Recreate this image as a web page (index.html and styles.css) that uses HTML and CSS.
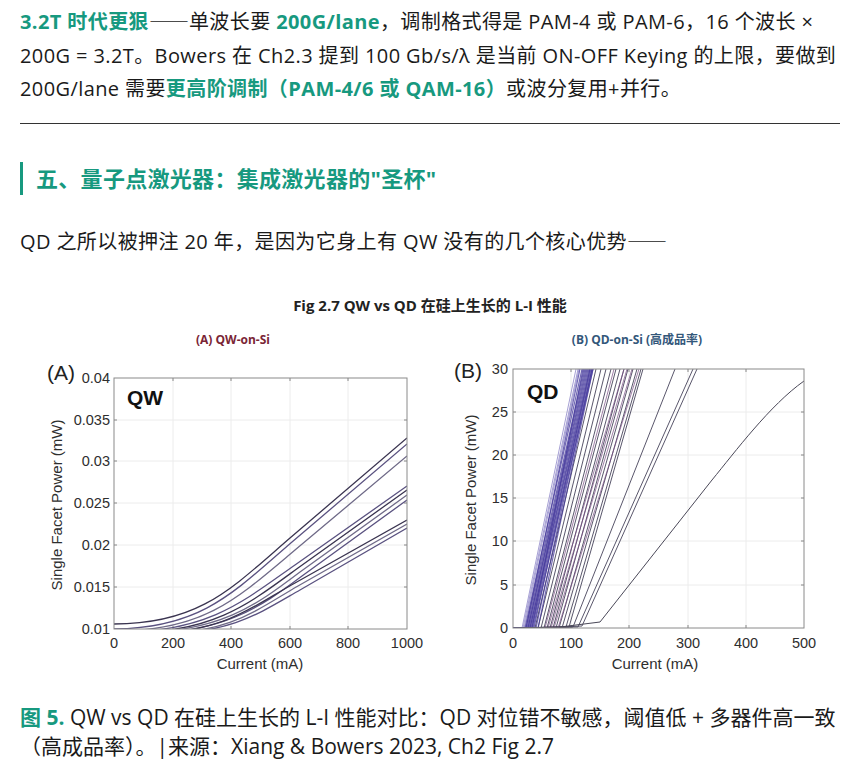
FILE: index.html
```html
<!DOCTYPE html>
<html lang="zh-CN">
<head>
<meta charset="utf-8">
<title>量子点激光器</title>
<link rel="stylesheet" href="styles.css">
</head>
<body>
<main class="article">
  <p class="para"><strong class="hl">3.2T 时代更狠</strong><span class="dash">——</span>单波长要 <strong class="hl">200G/lane</strong>，调制格式得是 PAM-4 或 PAM-6，16 个波长 × 200G = 3.2T。Bowers 在 Ch2.3 提到 100 Gb/s/λ 是当前 ON-OFF Keying 的上限，要做到 200G/lane 需要<strong class="hl">更高阶调制（PAM-4/6 或 QAM-16）</strong>或波分复用+并行。</p>
  <hr class="divider">
  <h2 class="section-title">五、量子点激光器：集成激光器的"圣杯"</h2>
  <p class="para para-lead">QD 之所以被押注 20 年，是因为它身上有 QW 没有的几个核心优势<span class="dash">——</span></p>
  <figure class="fig">
    <svg class="chart" viewBox="20 284 820 404" width="820" height="404" xmlns="http://www.w3.org/2000/svg">
      <defs>
        <clipPath id="clipA"><rect x="114" y="378" width="293" height="251"/></clipPath>
        <clipPath id="clipB"><rect x="513" y="369" width="291" height="259"/></clipPath>
      </defs>
      <text x="430" y="311" class="fig-title" text-anchor="middle">Fig 2.7 QW vs QD 在硅上生长的 L-I 性能</text>

      <!-- Panel A -->
      <text x="233" y="344" class="sub sub-a" text-anchor="middle">(A) QW-on-Si</text>
      <g class="grid">
        <line x1="173" y1="378" x2="173" y2="629"/><line x1="231" y1="378" x2="231" y2="629"/>
        <line x1="290" y1="378" x2="290" y2="629"/><line x1="348" y1="378" x2="348" y2="629"/>
        <line x1="114" y1="420" x2="407" y2="420"/><line x1="114" y1="461" x2="407" y2="461"/>
        <line x1="114" y1="503" x2="407" y2="503"/><line x1="114" y1="545" x2="407" y2="545"/>
        <line x1="114" y1="587" x2="407" y2="587"/>
      </g>
      <g class="ticks">
        <line x1="173" y1="629" x2="173" y2="626"/><line x1="231" y1="629" x2="231" y2="626"/>
        <line x1="290" y1="629" x2="290" y2="626"/><line x1="348" y1="629" x2="348" y2="626"/>
        <line x1="173" y1="378" x2="173" y2="381"/><line x1="231" y1="378" x2="231" y2="381"/>
        <line x1="290" y1="378" x2="290" y2="381"/><line x1="348" y1="378" x2="348" y2="381"/>
        <line x1="114" y1="420" x2="117" y2="420"/><line x1="114" y1="461" x2="117" y2="461"/>
        <line x1="114" y1="503" x2="117" y2="503"/><line x1="114" y1="545" x2="117" y2="545"/>
        <line x1="114" y1="587" x2="117" y2="587"/>
        <line x1="407" y1="420" x2="404" y2="420"/><line x1="407" y1="461" x2="404" y2="461"/>
        <line x1="407" y1="503" x2="404" y2="503"/><line x1="407" y1="545" x2="404" y2="545"/>
        <line x1="407" y1="587" x2="404" y2="587"/>
      </g>
      <g clip-path="url(#clipA)" class="qw-curves">
        <path class="c1" d="M114,624 C200,624 232,588 290,538 L407,438"/>
        <path class="c2" d="M114,629 C202,628 234,592 292,542 L407,444"/>
        <path class="c3" d="M120,631 C205,630 238,598 295,550 L407,456"/>
        <path class="c2" d="M125,632 C210,631 245,600 295,565 L407,486"/>
        <path class="c1" d="M130,633 C215,632 250,603 298,568 L407,490"/>
        <path class="c3" d="M135,633 C220,632 255,606 300,572 L407,495"/>
        <path class="c2" d="M140,634 C222,633 258,609 302,576 L407,500"/>
        <path class="c1" d="M150,633 C225,632 250,608 295,583 L407,520"/>
        <path class="c3" d="M155,634 C230,633 255,611 298,586 L407,524"/>
        <path class="c2" d="M160,634 C232,633 258,614 300,590 L407,528"/>
      </g>
      <rect class="frame" x="114" y="378" width="293" height="251"/>
      <text x="47" y="380" class="panel-tag">(A)</text>
      <text x="127" y="405" class="inset">QW</text>
      <g class="tick-label" text-anchor="end">
        <text x="110" y="383">0.04</text><text x="110" y="425">0.035</text>
        <text x="110" y="466">0.03</text><text x="110" y="508">0.025</text>
        <text x="110" y="550">0.02</text><text x="110" y="592">0.015</text>
        <text x="110" y="634">0.01</text>
      </g>
      <g class="tick-label" text-anchor="middle">
        <text x="114" y="648">0</text><text x="173" y="648">200</text>
        <text x="231" y="648">400</text><text x="290" y="648">600</text>
        <text x="348" y="648">800</text><text x="407" y="648">1000</text>
      </g>
      <text x="260" y="669" class="axis-title" text-anchor="middle">Current (mA)</text>
      <text transform="translate(62,505) rotate(-90)" class="axis-title" text-anchor="middle">Single Facet Power (mW)</text>

      <!-- Panel B -->
      <text x="637" y="344" class="sub sub-b" text-anchor="middle">(B) QD-on-Si (高成品率)</text>
      <g class="grid">
        <line x1="571" y1="369" x2="571" y2="628"/><line x1="629" y1="369" x2="629" y2="628"/>
        <line x1="688" y1="369" x2="688" y2="628"/><line x1="746" y1="369" x2="746" y2="628"/>
        <line x1="513" y1="412" x2="804" y2="412"/><line x1="513" y1="455" x2="804" y2="455"/>
        <line x1="513" y1="498" x2="804" y2="498"/><line x1="513" y1="541" x2="804" y2="541"/>
        <line x1="513" y1="585" x2="804" y2="585"/>
      </g>
      <g class="ticks">
        <line x1="571" y1="628" x2="571" y2="625"/><line x1="629" y1="628" x2="629" y2="625"/>
        <line x1="688" y1="628" x2="688" y2="625"/><line x1="746" y1="628" x2="746" y2="625"/>
        <line x1="571" y1="369" x2="571" y2="372"/><line x1="629" y1="369" x2="629" y2="372"/>
        <line x1="688" y1="369" x2="688" y2="372"/><line x1="746" y1="369" x2="746" y2="372"/>
        <line x1="513" y1="412" x2="516" y2="412"/><line x1="513" y1="455" x2="516" y2="455"/>
        <line x1="513" y1="498" x2="516" y2="498"/><line x1="513" y1="541" x2="516" y2="541"/>
        <line x1="513" y1="585" x2="516" y2="585"/>
        <line x1="804" y1="412" x2="801" y2="412"/><line x1="804" y1="455" x2="801" y2="455"/>
        <line x1="804" y1="498" x2="801" y2="498"/><line x1="804" y1="541" x2="801" y2="541"/>
        <line x1="804" y1="585" x2="801" y2="585"/>
      </g>
      <g clip-path="url(#clipB)">
        <g class="qd-gray">
          <polyline points="513,628 535,628 596,369"/>
          <polyline points="513,628 538,628 601,369"/>
          <polyline points="513,628 541,628 606,369"/>
          <polyline points="513,628 544,628 611,369"/>
          <polyline points="513,628 547,628 616,369"/>
          <polyline points="513,628 550,628 620,369"/>
          <polyline points="513,628 553,628 624,369"/>
          <polyline points="513,628 556,628 628,369"/>
          <polyline points="513,628 559,628 633,369"/>
          <polyline points="513,628 562,628 637,369"/>
          <polyline points="513,628 566,627 641,369"/>
          <polyline points="513,628 569,627 643,369"/>
          <polyline points="513,628 573,627 675,369"/>
          <polyline points="513,628 578,627 693,369"/>
          <polyline points="513,628 560,627 582,626 697,369"/>
        </g>
        <g class="qd-tint">
          <polyline points="513,628 548,628 624,369"/>
          <polyline points="513,628 554,628 632,369"/>
          <polyline points="513,628 558,628 639,369"/>
          <polyline points="513,628 545,628 614,369"/>
          <polyline points="513,628 551,628 627,369"/>
        </g>
        <g class="qd-blue-light">
          <polyline points="513,628 522,628 576,369"/>
          <polyline points="513,628 523,628 578,369"/>
          <polyline points="513,628 524,628 579,369"/>
        </g>
        <g class="qd-blue">
          <polyline points="513,628 526,628 580,369"/>
          <polyline points="513,628 525,628 582,369"/>
          <polyline points="513,628 526,628 584,369"/>
          <polyline points="513,628 527,628 585,369"/>
          <polyline points="513,628 528,628 586,369"/>
          <polyline points="513,628 528,628 587,369"/>
          <polyline points="513,628 529,628 588,369"/>
          <polyline points="513,628 530,628 589,369"/>
          <polyline points="513,628 530,628 590,369"/>
          <polyline points="513,628 531,628 591,369"/>
          <polyline points="513,628 532,628 592,369"/>
          <polyline points="513,628 533,628 593,369"/>
          <polyline points="513,628 534,628 590,369"/>
          <polyline points="513,628 536,628 592,369"/>
          <polyline points="513,628 538,628 593,369"/>
          <polyline points="513,628 532,628 583,369"/>
        </g>
        <path class="qd-low" d="M513,628 L560,627 L600,622 L712,480 C735,452 770,405 804,381"/>
      </g>
      <rect class="frame" x="513" y="369" width="291" height="259"/>
      <text x="454" y="378" class="panel-tag">(B)</text>
      <text x="527" y="399" class="inset">QD</text>
      <g class="tick-label" text-anchor="end">
        <text x="508" y="374">30</text><text x="508" y="417">25</text>
        <text x="508" y="460">20</text><text x="508" y="503">15</text>
        <text x="508" y="546">10</text><text x="508" y="590">5</text>
        <text x="508" y="633">0</text>
      </g>
      <g class="tick-label" text-anchor="middle">
        <text x="513" y="648">0</text><text x="571" y="648">100</text>
        <text x="629" y="648">200</text><text x="688" y="648">300</text>
        <text x="746" y="648">400</text><text x="804" y="648">500</text>
      </g>
      <text x="655" y="669" class="axis-title" text-anchor="middle">Current (mA)</text>
      <text transform="translate(476,500) rotate(-90)" class="axis-title" text-anchor="middle">Single Facet Power (mW)</text>
    </svg>
    <figcaption class="caption"><strong class="hl">图 5.</strong> QW vs QD 在硅上生长的 L-I 性能对比：QD 对位错不敏感，阈值低 + 多器件高一致（高成品率）。|来源：Xiang &amp; Bowers 2023, Ch2 Fig 2.7</figcaption>
  </figure>
</main>
</body>
</html>
```

FILE: styles.css
```css
body {
  margin: 0;
  background: #ffffff;
  color: #1a1a1a;
  font-family: "Open Sans", "Noto Sans CJK SC", sans-serif;
}

.article {
  width: 820px;
  margin-left: 20px;
  padding-top: 4px;
}

.para {
  margin: 0;
  font-size: 20px;
  line-height: 33.5px;
  letter-spacing: 0.4px;
}

.dash {
  font-family: "Noto Sans CJK SC", sans-serif;
  letter-spacing: 0;
}

.hl {
  color: #17997f;
  font-weight: 700;
}

.divider {
  border: 0;
  border-top: 1px solid #333333;
  margin: 17.5px 0 0;
}

.section-title {
  margin: 38px 0 0;
  padding-left: 13px;
  border-left: 3px solid #17997f;
  color: #17997f;
  font-size: 22px;
  line-height: 33px;
  font-weight: 700;
  letter-spacing: 0.3px;
}

.para-lead {
  margin-top: 29px;
}

.fig {
  margin: 25.5px 0 0;
}

.chart {
  display: block;
}

.fig-title {
  font-family: "Open Sans", "Noto Sans CJK SC", sans-serif;
  font-size: 15px;
  font-weight: 700;
  fill: #222222;
}

.sub {
  font-family: "Open Sans", "Noto Sans CJK SC", sans-serif;
  font-size: 12px;
  font-weight: 700;
}

.sub-a { fill: #7a2535; }
.sub-b { fill: #33577a; }

.grid line {
  stroke: #ececec;
  stroke-width: 1;
}

.ticks line {
  stroke: #8a8a8a;
  stroke-width: 1;
}

.frame {
  fill: none;
  stroke: #8a8a8a;
  stroke-width: 1;
}

.qw-curves path {
  fill: none;
  stroke-width: 1.3;
}
.qw-curves .c1 { stroke: #3a3450; }
.qw-curves .c2 { stroke: #5a5280; }
.qw-curves .c3 { stroke: #6f6a88; }

.qd-gray polyline {
  fill: none;
  stroke: #46435a;
  stroke-width: 0.9;
}

.qd-tint polyline {
  fill: none;
  stroke: #7a4f86;
  stroke-width: 0.9;
  opacity: 0.8;
}

.qd-blue-light polyline {
  fill: none;
  stroke: #6a60b8;
  stroke-width: 1;
  opacity: 0.6;
}

.qd-blue polyline {
  fill: none;
  stroke: #463a9c;
  stroke-width: 1.2;
  opacity: 0.75;
}

.qd-low {
  fill: none;
  stroke: #4a4858;
  stroke-width: 1;
}

.panel-tag {
  font-family: "Liberation Sans", Arial, sans-serif;
  font-size: 21px;
  fill: #222222;
}

.inset {
  font-family: "Liberation Sans", Arial, sans-serif;
  font-size: 21px;
  font-weight: 700;
  fill: #111111;
}

.tick-label text {
  font-family: "Liberation Sans", Arial, sans-serif;
  font-size: 14.5px;
  fill: #2e2e2e;
}

.axis-title {
  font-family: "Liberation Sans", Arial, sans-serif;
  font-size: 15px;
  fill: #2e2e2e;
}

.caption {
  margin: 14.5px 0 0;
  font-size: 21px;
  line-height: 29px;
  color: #1a1a1a;
}
```
